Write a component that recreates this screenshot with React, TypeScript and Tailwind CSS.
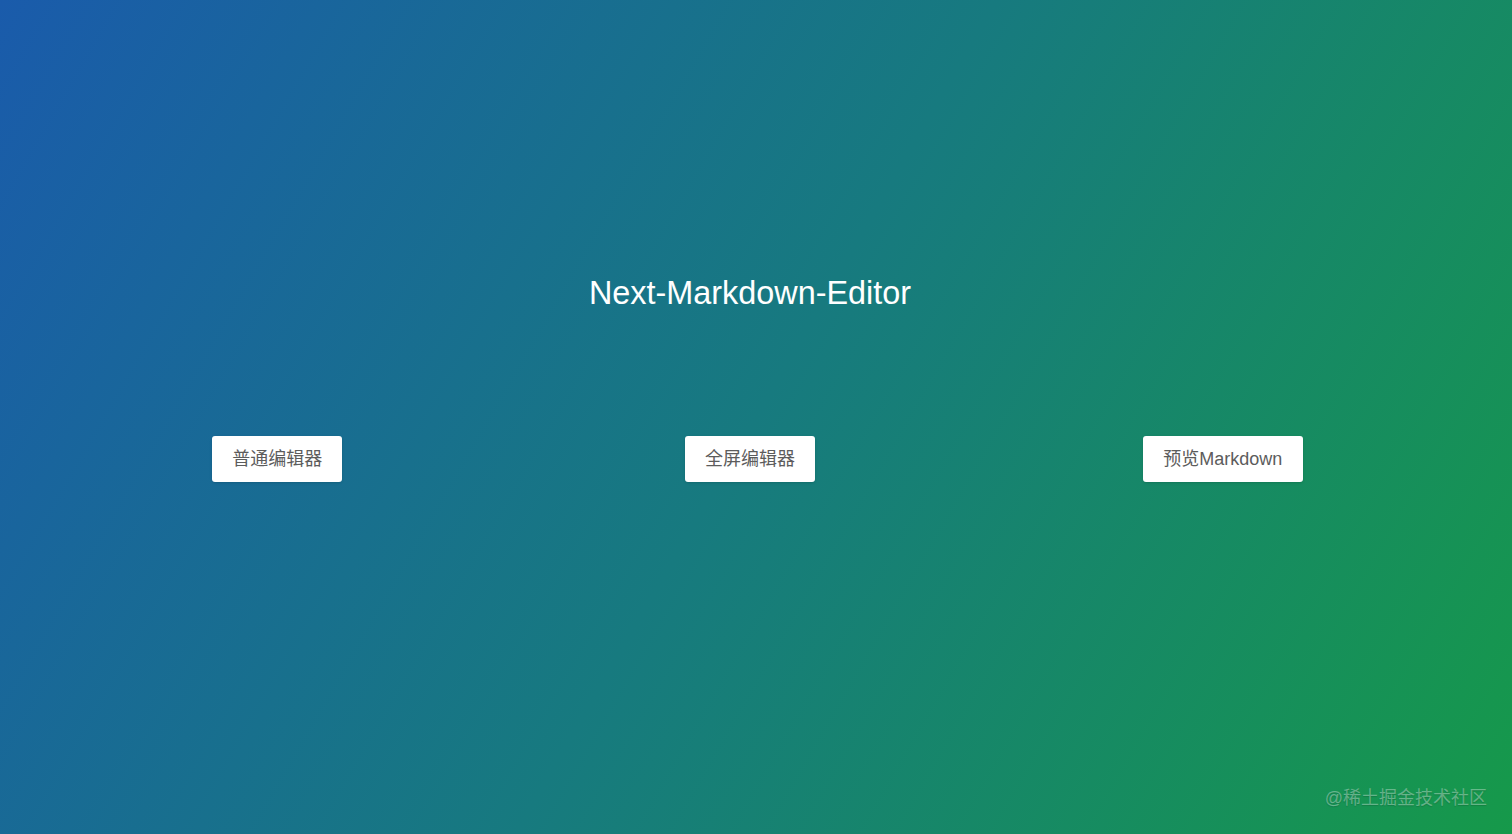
import React from "react";

const FONT = { fontFamily: '"Liberation Sans", "Noto Sans CJK SC", Arial, sans-serif' };

const buttons = [
  { label: "普通编辑器", width: "w-[130px]" },
  { label: "全屏编辑器", width: "w-[130px]" },
  { label: "预览Markdown", width: "w-[160px]" },
];

const App: React.FC = () => {
  return (
    <div
      className="relative w-full h-[834px] overflow-hidden bg-[linear-gradient(120deg,#1a5bab_0%,#177a7f_50%,#16994a_100%)]"
      style={FONT}
    >
      {/* ── content column, offset for the missing scrollbar ── */}
      <div className="flex flex-col pl-[41px] pr-[53px] pt-[275px]">
        <h1 className="text-center text-white text-[32.4px] leading-[37px] font-normal">
          Next-Markdown-Editor
        </h1>

        <div className="grid grid-cols-3 mt-[124px]">
          {buttons.map((b) => (
            <div key={b.label} className="flex justify-center">
              <button
                className={`${b.width} h-[46px] bg-white rounded-[3px] shadow-sm text-[18px] text-[#5c5c5c] flex items-center justify-center`}
              >
                {b.label}
              </button>
            </div>
          ))}
        </div>
      </div>

      {/* ── watermark ── */}
      <div className="absolute right-[25px] bottom-[24px] text-[18px] leading-[24px] text-white/35 [text-shadow:0_1px_1px_rgba(0,0,0,0.15)]">
        @稀土掘金技术社区
      </div>
    </div>
  );
};

export default App;
